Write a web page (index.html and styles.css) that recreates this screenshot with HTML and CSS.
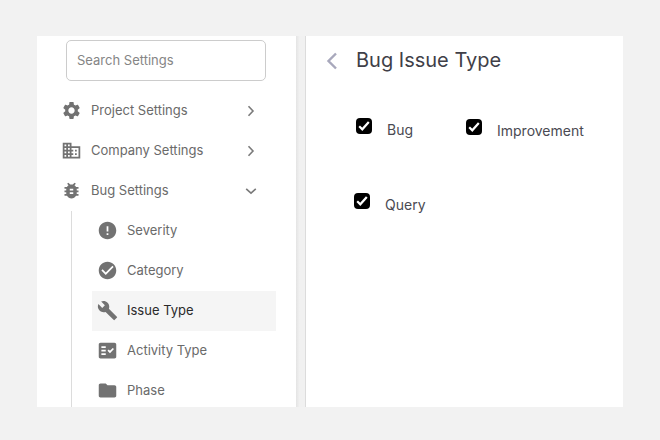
FILE: index.html
```html
<!DOCTYPE html>
<html lang="en">
<head>
<meta charset="utf-8">
<title>Bug Issue Type</title>
<link rel="stylesheet" href="styles.css">
</head>
<body>
<div class="app">
  <aside class="sidebar">
    <div class="search"><input class="search-input" type="text" placeholder="Search Settings"></div>
    <nav class="nav">
      <div class="row">
        <svg class="icon" viewBox="0 0 24 24"><path d="M19.14 12.94c.04-.3.06-.61.06-.94 0-.32-.02-.64-.07-.94l2.03-1.58c.18-.14.23-.41.12-.61l-1.92-3.32c-.12-.22-.37-.29-.59-.22l-2.39.96c-.5-.38-1.03-.7-1.62-.94l-.36-2.54c-.04-.24-.24-.41-.48-.41h-3.84c-.24 0-.43.17-.47.41l-.36 2.54c-.59.24-1.13.57-1.62.94l-2.39-.96c-.22-.08-.47 0-.59.22L2.74 8.87c-.12.21-.08.47.12.61l2.03 1.58c-.05.3-.09.63-.09.94s.02.64.07.94l-2.03 1.58c-.18.14-.23.41-.12.61l1.92 3.32c.12.22.37.29.59.22l2.39-.96c.5.38 1.03.7 1.62.94l.36 2.54c.05.24.24.41.48.41h3.84c.24 0 .44-.17.47-.41l.36-2.54c.59-.24 1.13-.56 1.62-.94l2.39.96c.22.08.47 0 .59-.22l1.92-3.32c.12-.22.07-.47-.12-.61l-2.01-1.58zM12 15.6c-1.98 0-3.6-1.62-3.6-3.6s1.62-3.6 3.6-3.6 3.6 1.62 3.6 3.6-1.62 3.6-3.6 3.6z"/></svg>
        <span class="label">Project Settings</span>
        <svg class="chev" viewBox="0 0 12 12"><path d="M3.500 1.200 8 6l-4.500 4.800"/></svg>
      </div>
      <div class="row">
        <svg class="icon" viewBox="0 0 24 24"><path d="M12 7V3H2v18h20V7H12zM6 19H4v-2h2v2zm0-4H4v-2h2v2zm0-4H4V9h2v2zm0-4H4V5h2v2zm4 12H8v-2h2v2zm0-4H8v-2h2v2zm0-4H8V9h2v2zm0-4H8V5h2v2zm10 12h-8v-2h2v-2h-2v-2h2v-2h-2V9h8v10zm-2-8h-2v2h2v-2zm0 4h-2v2h2v-2z"/></svg>
        <span class="label">Company Settings</span>
        <svg class="chev" viewBox="0 0 12 12"><path d="M3.500 1.200 8 6l-4.500 4.800"/></svg>
      </div>
      <div class="row">
        <svg class="icon" viewBox="0 0 24 24"><path d="M20 8h-2.810c-.45-.78-1.070-1.450-1.820-1.960L17 4.410 15.590 3l-2.170 2.170C12.960 5.060 12.490 5 12 5c-.49 0-.96.06-1.410.17L8.410 3 7 4.410l1.620 1.630C7.880 6.550 7.260 7.220 6.810 8H4v2h2.090c-.05.33-.09.66-.09 1v1H4v2h2v1c0 .34.04.67.09 1H4v2h2.810c1.040 1.790 2.970 3 5.190 3s4.150-1.210 5.190-3H20v-2h-2.090c.05-.33.09-.66.09-1v-1h2v-2h-2v-1c0-.34-.04-.67-.09-1H20V8zm-6 8h-4v-2h4v2zm0-4h-4v-2h4v2z"/></svg>
        <span class="label">Bug Settings</span>
        <svg class="chev" viewBox="0 0 12 12"><path d="M1.200 3.800 6 8.200l4.800-4.400"/></svg>
      </div>
      <div class="subnav">
        <div class="row sub">
          <svg class="icon" viewBox="0 0 24 24"><path d="M12 2C6.480 2 2 6.480 2 12s4.480 10 10 10 10-4.480 10-10S17.520 2 12 2zm1 15h-2v-2h2v2zm0-4h-2V7h2v6z"/></svg>
          <span class="label">Severity</span>
        </div>
        <div class="row sub">
          <svg class="icon" viewBox="0 0 24 24"><path d="M12 2C6.480 2 2 6.480 2 12s4.480 10 10 10 10-4.480 10-10S17.520 2 12 2zm-2 15l-5-5 1.410-1.410L10 14.170l7.590-7.590L19 8l-9 9z"/></svg>
          <span class="label">Category</span>
        </div>
        <div class="row sub active">
          <svg class="icon" viewBox="0 0 24 24"><path d="M22.700 19l-9.100-9.100c.9-2.300.4-5-1.500-6.900-2-2-5-2.400-7.400-1.300L9 6 6 9 1.600 4.700C.4 7.100.9 10.100 2.900 12.100c1.900 1.900 4.600 2.400 6.900 1.500l9.100 9.100c.4.4 1 .4 1.400 0l2.300-2.300c.5-.4.5-1.100.1-1.400z"/></svg>
          <span class="label">Issue Type</span>
        </div>
        <div class="row sub">
          <svg class="icon" viewBox="0 0 24 24"><path d="M20 3H4c-1.100 0-2 .9-2 2v14c0 1.100.9 2 2 2h16c1.100 0 2-.9 2-2V5c0-1.100-.9-2-2-2zM10 17H5v-2h5v2zm0-4H5v-2h5v2zm0-4H5V7h5v2zm4.820 6L12 12.160l1.410-1.410 1.410 1.420L17.990 9l1.420 1.420L14.820 15z"/></svg>
          <span class="label">Activity Type</span>
        </div>
        <div class="row sub">
          <svg class="icon" viewBox="0 0 24 24"><path d="M10 4H4c-1.100 0-1.990.9-1.990 2L2 18c0 1.100.9 2 2 2h16c1.100 0 2-.9 2-2V8c0-1.100-.9-2-2-2h-8l-2-2z"/></svg>
          <span class="label">Phase</span>
        </div>
      </div>
    </nav>
  </aside>
  <div class="gutter"></div>
  <main class="main">
    <header class="head">
      <svg class="back" viewBox="0 0 12 18"><path d="M10 1.500 2.500 9l7.500 7.500"/></svg>
      <h1 class="title">Bug Issue Type</h1>
    </header>
    <div class="options">
      <label class="option opt-bug"><span class="box"><svg viewBox="0 0 16 16"><path d="M3.200 8.200 6.300 11.300 12.800 4"/></svg></span><span class="opt-text">Bug</span></label>
      <label class="option opt-improvement"><span class="box"><svg viewBox="0 0 16 16"><path d="M3.200 8.200 6.300 11.300 12.800 4"/></svg></span><span class="opt-text">Improvement</span></label>
      <label class="option opt-query"><span class="box"><svg viewBox="0 0 16 16"><path d="M3.200 8.200 6.300 11.300 12.800 4"/></svg></span><span class="opt-text">Query</span></label>
    </div>
  </main>
</div>
</body>
</html>
```
FILE: styles.css
```css
* { box-sizing: border-box; }
html, body { margin: 0; height: 100%; }
body {
  background: #f2f2f2;
  padding: 36px 37px 33px;
  font-family: Inter, "Liberation Sans", sans-serif;
  overflow: hidden;
}
.app { display: flex; width: 586px; height: 371px; overflow: hidden; }
.sidebar { width: 259px; flex: none; background: #fff; overflow: hidden; }
.search { padding: 4px 30px 0 29px; }
.search-input {
  display: block;
  width: 200px;
  height: 41px;
  border: 1px solid #ccc;
  border-radius: 5px;
  padding: 0 10px 2px;
  font: 13px Inter, "Liberation Sans", sans-serif;
  outline: none;
}
.search-input::placeholder { color: #858585; opacity: 1; }
.nav { margin-top: 10px; padding-left: 24px; }
.row { display: flex; align-items: center; height: 40px; color: #6a6a6a; font-size: 13px; }
.icon { width: 21px; height: 21px; fill: #727272; flex: none; margin-bottom: 1px; }
.label { margin-left: 9px; flex: 1; padding-bottom: 2px; }
.chev { width: 12px; height: 12px; flex: none; fill: none; stroke: #7a7a7a; stroke-width: 1.600; margin-right: 39px; margin-bottom: 1px; }
.subnav { margin-left: 10px; border-left: 1px solid #dcdcdc; padding-left: 20px; width: 205px; }
.sub { padding-left: 5px; }
.sub .label { margin-left: 9px; }
.active { background: #f5f5f5; color: #2a2a2a; }
.gutter { width: 10px; flex: none; background: linear-gradient(to right, #e4e4e4, #f1f1f1 40%, #f1f1f1); border-right: 1px solid #dcdcdc; }
.main { flex: 1; background: #fff; }
.head { display: flex; align-items: center; height: 49px; padding-left: 20px; }
.back { width: 12px; height: 18px; flex: none; fill: none; stroke: #a8a8bc; stroke-width: 2.400; }
.title { margin: 0 0 0 18px; font-size: 20px; font-weight: 400; color: #3f3f48; padding-bottom: 2px; }
.options { display: flex; flex-wrap: wrap; width: 300px; }
.option { display: flex; align-items: flex-start; font-size: 14px; color: #4a4a52; }
.box { width: 16px; height: 16px; flex: none; background: #000; border-radius: 4px; display: flex; }
.box svg { width: 16px; height: 16px; fill: none; stroke: #fff; stroke-width: 2.200; }
.opt-text { margin-left: 15px; margin-top: 3px; }
.opt-bug { margin: 33px 0 0 50px; width: 110px; }
.opt-improvement { margin: 34px 0 0 0; }
.opt-query { margin: 54px 0 0 48px; width: 120px; }
```
